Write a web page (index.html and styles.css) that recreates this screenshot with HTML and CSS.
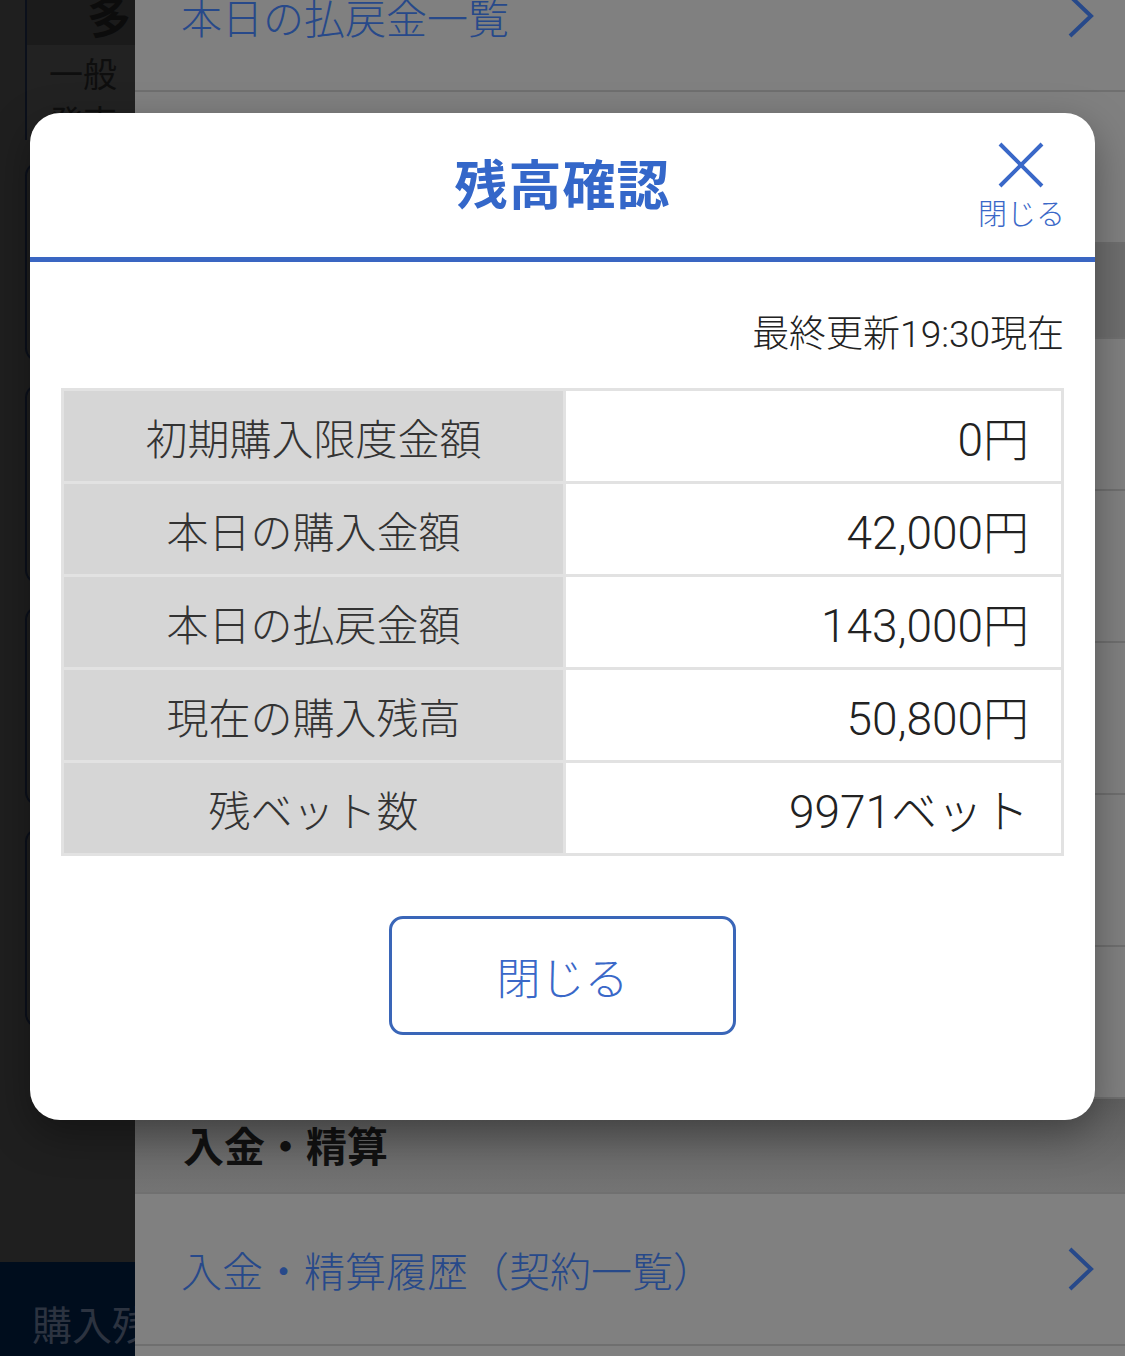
FILE: index.html
```html
<!DOCTYPE html>
<html lang="ja">
<head>
    <meta charset="UTF-8">
    <meta name="viewport" content="width=device-width, initial-scale=1.0">
    <title>残高確認</title>
    <link rel="stylesheet" href="styles.css">
</head>
<body>
    <div class="page">
        <div class="side">
            <div class="side-top">
                <div class="side-head">多</div>
                <div class="side-sub">一般<br>発売</div>
            </div>
            <div class="side-card"></div>
            <div class="side-card"></div>
            <div class="side-card"></div>
            <div class="side-card"></div>
            <div class="side-foot">購入残</div>
        </div>
        <div class="menu">
            <div class="menu-row first">
                <span>本日の払戻金一覧</span>
                <svg class="chev" width="28" height="44" viewBox="0 0 28 44"><polyline points="3,2 24,22 3,42" fill="none" stroke="#27498a" stroke-width="4"/></svg>
            </div>
            <div class="menu-row"></div>
            <div class="menu-head short"></div>
            <div class="menu-row"></div>
            <div class="menu-row"></div>
            <div class="menu-row"></div>
            <div class="menu-row"></div>
            <div class="menu-row"></div>
            <div class="menu-head">入金・精算</div>
            <div class="menu-row">
                <span>入金・精算履歴（契約一覧）</span>
                <svg class="chev" width="28" height="44" viewBox="0 0 28 44"><polyline points="3,2 24,22 3,42" fill="none" stroke="#27498a" stroke-width="4"/></svg>
            </div>
        </div>
    </div>

    <div class="modal">
        <div class="modal-header">
            <h1 class="modal-title">残高確認</h1>
            <button class="close-x">
                <svg width="48" height="48" viewBox="0 0 48 48">
                    <path d="M3 3 L45 45 M45 3 L3 45" stroke="#3a68c8" stroke-width="4" fill="none"/>
                </svg>
                <span>閉じる</span>
            </button>
        </div>
        <div class="modal-body">
            <p class="updated">最終更新19:30現在</p>
            <table class="balance">
                <tr><th>初期購入限度金額</th><td>0円</td></tr>
                <tr><th>本日の購入金額</th><td>42,000円</td></tr>
                <tr><th>本日の払戻金額</th><td>143,000円</td></tr>
                <tr><th>現在の購入残高</th><td>50,800円</td></tr>
                <tr><th>残ベット数</th><td>9971ベット</td></tr>
            </table>
            <div class="actions">
                <button class="close-btn">閉じる</button>
            </div>
        </div>
    </div>
</body>
</html>
```

FILE: styles.css
```css
* { box-sizing: border-box; margin: 0; padding: 0; }
body { font-family: "Noto Sans CJK JP", "Noto Sans", sans-serif; width: 1125px; height: 1356px; overflow: hidden; background: #1f1f1f; }

.page { display: flex; height: 1356px; }
.side { width: 135px; flex-shrink: 0; background: #1f1f1f; display: flex; flex-direction: column; padding-left: 25px; }
.side-top { height: 140px; border-left: 2px solid #0b101b; }
.side-head { height: 45px; background: #1b1b1b; color: #0c0c0c; font-size: 44px; line-height: 30px; padding-left: 60px; overflow: hidden; font-weight: bold; }
.side-sub { background: #222; color: #0e0e0e; font-size: 34px; line-height: 48px; padding: 4px 0 0 22px; height: 95px; overflow: hidden; }
.side-card { height: 200px; margin-top: 22px; border: 2px solid #0b101b; border-right: none; border-radius: 14px 0 0 14px; }
.side-foot { margin: auto 0 0 -25px; height: 94px; background: #000d1d; color: #2c3340; font-size: 40px; padding: 32px 0 0 32px; white-space: nowrap; overflow: hidden; }

.menu { flex: 1; background: #808080; display: flex; flex-direction: column; margin-top: -60px; }
.menu-row { height: 152px; border-bottom: 2px solid #6f6f6f; display: flex; align-items: center; justify-content: space-between; padding: 0 30px 0 46px; color: #27498a; font-size: 41px; font-weight: 300; flex-shrink: 0; }
.menu-row.first { padding-top: 2px; }
.menu-head { height: 95px; background: linear-gradient(#5e5e5e, #747474); border-bottom: 2px solid #707070; color: #111; font-size: 41px; font-weight: bold; padding: 15px 0 0 48px; flex-shrink: 0; }
.menu-head.short { background: #6e6e6e; }

.modal { position: absolute; left: 30px; top: 113px; width: 1065px; height: 1007px; background: #fff; border-radius: 30px; box-shadow: 0 14px 40px rgba(0, 0, 0, 0.35); overflow: hidden; }
.modal-header { position: relative; height: 149px; border-bottom: 5px solid #3a66c2; display: flex; align-items: center; justify-content: center; }
.modal-title { color: #3467c9; font-size: 53px; font-weight: bold; letter-spacing: 1px; margin-top: -6px; }
.close-x { position: absolute; right: 30px; top: 28px; background: none; border: none; display: flex; flex-direction: column; align-items: center; color: #3a68c8; font-family: inherit; font-size: 29px; font-weight: 300; line-height: 38px; cursor: pointer; }
.close-x svg { margin-bottom: 4px; }

.modal-body { padding: 0 31px; }
.updated { text-align: right; font-family: "Roboto", "Noto Sans CJK JP", sans-serif; font-size: 37px; font-weight: 300; color: #222; line-height: 48px; margin: 49px 0 29px; }
.balance { width: 1003px; border-collapse: collapse; border: 3px solid #e2e2e2; }
.balance th, .balance td { height: 93px; border: 3px solid #e2e2e2; font-weight: 300; color: #2a2a2a; }
.balance th { width: 502px; background: #d6d6d6; text-align: center; font-size: 42px; color: #333; }
.balance td { background: #fff; text-align: right; padding-right: 32px; font-family: "Roboto", "Noto Sans CJK JP", sans-serif; font-size: 46px; color: #222; }

.actions { display: flex; justify-content: center; padding-top: 60px; }
.close-btn { width: 347px; height: 119px; border: 3px solid #3a66b8; border-radius: 14px; background: #fff; color: #3a68c8; font-family: inherit; font-size: 44px; font-weight: 300; cursor: pointer; }
```
